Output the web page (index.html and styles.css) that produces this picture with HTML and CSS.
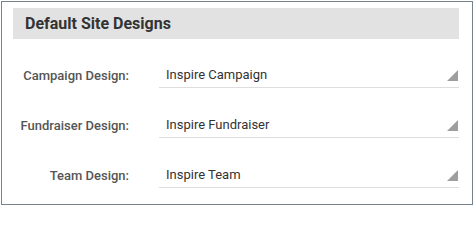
FILE: index.html
```html
<!DOCTYPE html>
<html>
<head>
<meta charset="utf-8">
<link rel="stylesheet" href="styles.css">
</head>
<body>
<div class="panel">
  <div class="panel-header">Default Site Designs</div>
  <div class="form">
    <div class="row">
      <label class="label">Campaign Design:</label>
      <div class="select"><span class="value">Inspire Campaign</span><span class="arrow"></span></div>
    </div>
    <div class="row">
      <label class="label">Fundraiser Design:</label>
      <div class="select"><span class="value">Inspire Fundraiser</span><span class="arrow"></span></div>
    </div>
    <div class="row">
      <label class="label">Team Design:</label>
      <div class="select"><span class="value">Inspire Team</span><span class="arrow"></span></div>
    </div>
  </div>
</div>
</body>
</html>
```
FILE: styles.css
```css
html, body {
  margin: 0;
  padding: 0;
  background: #ffffff;
}
body {
  font-family: Roboto, "Liberation Sans", Arial, sans-serif;
}
.panel {
  box-sizing: border-box;
  margin: 1px;
  width: 472px;
  height: 204px;
  border: 1px solid #76838f;
  padding: 6px 13px 0 11px;
}
.panel-header {
  height: 31px;
  line-height: 31px;
  background: #e2e2e2;
  padding-left: 12px;
  font-size: 16px;
  font-weight: 700;
  color: #333333;
}
.form {
  display: flex;
  flex-direction: column;
  gap: 24px;
  margin-top: 23px;
}
.row {
  display: grid;
  grid-template-columns: 116px 1fr;
  column-gap: 30px;
  align-items: center;
  height: 26px;
}
.label {
  text-align: right;
  font-size: 13px;
  font-weight: 500;
  color: #555555;
}
.select {
  display: flex;
  height: 25px;
  border-bottom: 1px solid #dddddd;
  align-items: center;
}
.value {
  flex: 1;
  padding-left: 7px;
  font-size: 13px;
  color: #333333;
}
.arrow {
  align-self: flex-end;
  width: 11px;
  height: 11px;
  margin: 0 1px 6px 0;
  background: #9e9e9e;
  clip-path: polygon(100% 0, 100% 100%, 0 100%);
}
```
